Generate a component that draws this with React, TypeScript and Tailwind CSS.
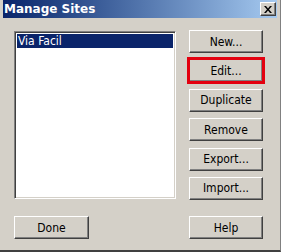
const font = { fontFamily: '"DejaVu Sans Condensed", "DejaVu Sans", Tahoma, sans-serif' };
const titleFont = { fontFamily: '"DejaVu Sans", Tahoma, sans-serif' };

const btn =
  "flex items-center justify-center h-[23px] bg-[#d4d0c8] border border-t-white border-l-white border-r-[#404040] border-b-[#404040] shadow-[inset_-1px_-1px_#808080] text-[12px] text-black";

function Button({ label, className = "" }: { label: string; className?: string }) {
  return <button className={`${btn} ${className}`}>{label}</button>;
}

export default function App() {
  return (
    <div
      style={font}
      className="w-[281px] h-[252px] bg-[#d4d0c8] flex flex-col border-b-2 border-b-[#404040] border-r border-r-[#808080] overflow-hidden"
    >
      <div className="mx-[3px] h-[18px] flex items-center justify-between bg-gradient-to-r from-[#0a246a] to-[#a6caf0]">
        <span style={titleFont} className="pl-[1px] text-[12px] font-bold text-white leading-none">
          Manage Sites
        </span>
        <div className="mr-[1px] w-[16px] h-[14px] bg-[#d4d0c8] border border-t-white border-l-white border-r-[#404040] border-b-[#404040] shadow-[inset_-1px_-1px_#808080] flex items-center justify-center">
          <svg width="8" height="7" viewBox="0 0 8 7">
            <path d="M0 0h2l2 2.5L6 0h2L5 3.5 8 7H6L4 4.5 2 7H0l3-3.5z" fill="#000" />
          </svg>
        </div>
      </div>

      <div className="flex flex-col pl-[14px] pt-[12px]">
        <div className="flex">
          <div className="mt-[1px] w-[162px] h-[168px] bg-white border border-t-[#808080] border-l-[#808080] border-r-white border-b-white shadow-[inset_1px_1px_#404040,inset_-1px_-1px_#d4d0c8] p-[2px]">
            <div className="h-[14px] bg-[#0a246a] text-white text-[12px] leading-[14px] px-[1px]">Via Facil</div>
          </div>
          <div className="ml-[13px] w-[74px] h-[170px] flex flex-col justify-between">
            <Button label="New..." />
            <Button
              label="Edit..."
              className="border-black outline-[3px] outline-solid outline-[#e3000f] outline-offset-[-1px]"
            />
            <Button label="Duplicate" />
            <Button label="Remove" />
            <Button label="Export..." />
            <Button label="Import..." />
          </div>
        </div>
        <div className="flex mt-[16px]">
          <Button label="Done" className="w-[75px]" />
          <Button label="Help" className="ml-[100px] w-[74px]" />
        </div>
      </div>
    </div>
  );
}
